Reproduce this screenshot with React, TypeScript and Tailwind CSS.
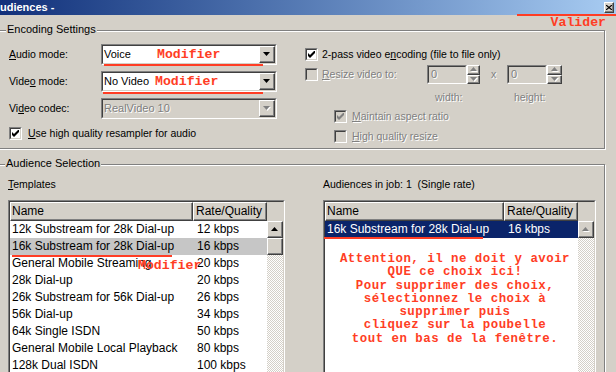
import type { ReactNode } from "react";

const sunkenOuter =
  "border border-t-[#808080] border-l-[#808080] border-r-white border-b-white";
const sunkenInner =
  "border border-t-[#404040] border-l-[#404040] border-r-[#d4d0c8] border-b-[#d4d0c8]";
const raised =
  "border border-t-white border-l-white border-r-[#404040] border-b-[#404040] shadow-[inset_-1px_-1px_0_#808080] bg-[#d4d0c8]";
const dim = "text-[#808080] [text-shadow:1px_1px_0_#fff]";
const red = "font-['Liberation_Mono',monospace] font-bold text-[13.2px] leading-[13.3px] text-[#ff3d24]";
const checker =
  "bg-[image:repeating-conic-gradient(#ffffff_0_25%,#d4d0c8_0_50%)] bg-[length:2px_2px]";

function Check({ checked, disabled }: { checked?: boolean; disabled?: boolean }) {
  return (
    <span className={`flex w-[13px] h-[13px] shrink-0 ${sunkenOuter}`}>
      <span
        className={`flex flex-1 items-center justify-center ${sunkenInner} ${
          disabled ? "bg-[#d4d0c8]" : "bg-white"
        }`}
      >
        {checked && (
          <svg width="7" height="7" viewBox="0 0 7 7">
            <polygon
              points="0,2 2,4 7,-1 7,2 2,7 0,5"
              fill={disabled ? "#808080" : "#000"}
            />
          </svg>
        )}
      </span>
    </span>
  );
}

function Arrow({ up, disabled }: { up?: boolean; disabled?: boolean }) {
  const pts = up ? "3.5,0 7,4 0,4" : "0,0 7,0 3.5,4";
  return (
    <svg width="8" height="5" viewBox="0 0 8 5">
      {disabled && <polygon points={pts} fill="#fff" transform="translate(1,1)" />}
      <polygon points={pts} fill={disabled ? "#808080" : "#000"} />
    </svg>
  );
}

function Combo({ text, disabled, children }: { text: string; disabled?: boolean; children?: ReactNode }) {
  return (
    <div className={`relative flex w-[176px] h-[21px] ${sunkenOuter}`}>
      <div className={`flex flex-1 ${sunkenInner} ${disabled ? "bg-[#d4d0c8]" : "bg-white"}`}>
        <span className={`flex flex-1 items-center pl-[1px] text-[11px] ${disabled ? dim : ""}`}>
          {text}
        </span>
        <span className={`flex w-[16px] items-center justify-center ${raised}`}>
          <Arrow disabled={disabled} />
        </span>
      </div>
      {children}
    </div>
  );
}

function Spin({ edit, btn }: { edit: number; btn: number }) {
  return (
    <div className="flex h-[19px]">
      <div className={`flex ${sunkenOuter}`} style={{ width: edit }}>
        <div className={`flex flex-1 items-center pl-[2px] text-[11px] ${sunkenInner} ${dim}`}>0</div>
      </div>
      <div className="flex flex-col" style={{ width: btn }}>
        <span className={`flex flex-1 items-center justify-center ${raised}`}>
          <Arrow up disabled />
        </span>
        <span className={`flex flex-1 items-center justify-center ${raised}`}>
          <Arrow disabled />
        </span>
      </div>
    </div>
  );
}

type Row = [string, string];

function ListView({
  nameW,
  rows,
  selected,
  focused,
  thumb,
  children,
}: {
  nameW: number;
  rows: Row[];
  selected: number;
  focused?: boolean;
  thumb?: boolean;
  children?: ReactNode;
}) {
  return (
    <div className={`flex h-[200px] ${sunkenOuter}`}>
      <div className={`flex flex-1 flex-col bg-white ${sunkenInner}`}>
        <div className="flex h-[19px] bg-[#d4d0c8] text-[12px]">
          <span className={`flex items-center pl-[1px] ${raised}`} style={{ width: nameW }}>
            Name
          </span>
          <span className={`flex w-[74px] items-center pl-[2px] ${raised}`}>Rate/Quality</span>
        </div>
        <div className="flex flex-1">
          <div className="relative flex-1 text-[12px]">
            {rows.map(([name, rate], i) => (
              <div
                key={name}
                className={`flex h-[17px] items-center ${
                  i === selected ? (focused ? "bg-[#0a246a] text-white" : "bg-[#c6c6c6]") : ""
                }`}
              >
                <span className="pl-[2px] whitespace-nowrap" style={{ width: nameW }}>
                  {name}
                </span>
                <span className="pl-[4px] whitespace-nowrap">{rate}</span>
              </div>
            ))}
            {children}
          </div>
          <div className="flex w-[16px] flex-col">
            <span className={`flex h-[17px] items-center justify-center ${raised}`}>
              <Arrow up disabled={!thumb} />
            </span>
            {thumb && <span className={`h-[17px] ${raised}`} />}
            <span className={`flex-1 ${checker}`} />
          </div>
        </div>
      </div>
    </div>
  );
}

const templates: Row[] = [
  ["12k Substream for 28k Dial-up", "12 kbps"],
  ["16k Substream for 28k Dial-up", "16 kbps"],
  ["General Mobile Streaming", "20 kbps"],
  ["28k Dial-up", "20 kbps"],
  ["26k Substream for 56k Dial-up", "26 kbps"],
  ["56k Dial-up", "34 kbps"],
  ["64k Single ISDN", "50 kbps"],
  ["General Mobile Local Playback", "80 kbps"],
  ["128k Dual ISDN", "100 kbps"],
];

const warning = [
  "Attention, il ne doit y avoir",
  "QUE ce choix ici!",
  "Pour supprimer des choix,",
  "sélectionnez le choix à",
  "supprimer puis",
  "cliquez sur la poubelle",
  "tout en bas de la fenêtre.",
];

export default function App() {
  return (
    <div className="relative w-[616px] h-[372px] overflow-hidden bg-[#d4d0c8] font-['Liberation_Sans',Arial,sans-serif] text-[10.5px] leading-[13px] text-black">
      {/* title bar */}
      <div className="flex h-[15px] items-center justify-between bg-linear-to-r from-[#12307a] to-[#a8ccf2]">
        <span className="text-[11px] font-bold text-white">udiences -</span>
        <span className={`mr-[2px] flex w-[10px] h-[11px] items-center justify-center ${raised}`}>
          <svg width="6" height="5" viewBox="0 0 6 5">
            <path d="M0 0L6 5M6 0L0 5" stroke="#000" strokeWidth="1.2" />
          </svg>
        </span>
      </div>
      <div className="absolute left-[517px] top-[14px] w-[99px] h-[2px] bg-[#ff3d24]" />
      <div className="flex h-[15px] items-center justify-end pr-[10px]">
        <span className={red}>Valider</span>
      </div>

      {/* Encoding Settings */}
      <div className="relative -ml-[4px] w-[609px] h-[119px] border border-[#808080] shadow-[inset_1px_1px_0_#fff,1px_1px_0_#fff]">
        <span className="absolute -top-[8px] left-[9px] bg-[#d4d0c8] px-[1px] text-[11px]">
          Encoding Settings
        </span>
        <div className="flex pt-[13px] pl-[12px]">
          <div className="flex w-[268px] flex-col gap-[6px]">
            <div className="flex h-[21px] items-center">
              <span className="w-[92px]">
                <u>A</u>udio mode:
              </span>
              <Combo text="Voice">
                <span className={`absolute left-[55px] top-[1px] flex h-[17px] items-center ${red}`}>Modifier</span>
                <span className="absolute left-[2px] top-[19px] w-[159px] h-[2px] bg-[#ff3d24]" />
              </Combo>
            </div>
            <div className="flex h-[21px] items-center">
              <span className="w-[92px]">
                Vide<u>o</u> mode:
              </span>
              <Combo text="No Video">
                <span className={`absolute left-[53px] top-[1px] flex h-[17px] items-center ${red}`}>Modifier</span>
                <span className="absolute left-[1px] top-[20px] w-[160px] h-[2px] bg-[#ff3d24]" />
              </Combo>
            </div>
            <div className="flex h-[21px] items-center">
              <span className="w-[92px]">
                Vi<u>d</u>eo codec:
              </span>
              <Combo text="RealVideo 10" disabled />
            </div>
            <div className="mt-[2px] flex h-[13px] items-center gap-[6px]">
              <Check checked />
              <span>
                <u>U</u>se high quality resampler for audio
              </span>
            </div>
          </div>

          <div className="ml-[28px] flex flex-col pt-[4px]">
            <div className="flex h-[13px] items-center gap-[4px]">
              <Check checked />
              <span>
                2-pass video e<u>n</u>coding (file to file only)
              </span>
            </div>
            <div className="mt-[4px] flex h-[19px] items-center">
              <Check disabled />
              <span className={`ml-[4px] w-[105px] ${dim}`}>
                <u>R</u>esize video to:
              </span>
              <Spin edit={40} btn={13} />
              <span className={`w-[27px] text-center ${dim}`}>x</span>
              <Spin edit={40} btn={15} />
            </div>
            <div className={`mt-[7px] flex h-[13px] pl-[130px] ${dim}`}>
              <span className="w-[79px]">width:</span>
              <span>height:</span>
            </div>
            <div className="mt-[6px] flex h-[13px] items-center gap-[5px] pl-[29px]">
              <Check checked disabled />
              <span className={dim}>
                <u>M</u>aintain aspect ratio
              </span>
            </div>
            <div className="mt-[7px] flex h-[13px] items-center gap-[5px] pl-[29px]">
              <Check disabled />
              <span className={dim}>
                <u>H</u>igh quality resize
              </span>
            </div>
          </div>
        </div>
      </div>

      {/* Audience Selection */}
      <div className="relative mt-[15px] -ml-[4px] w-[609px] h-[230px] border border-[#808080] shadow-[inset_1px_1px_0_#fff,1px_1px_0_#fff]">
        <span className="absolute -top-[8px] left-[8px] bg-[#d4d0c8] px-[1px] text-[11px]">
          Audience Selection
        </span>
        <div className="flex pt-[13px] pl-[11px]">
          <div className="flex w-[277px] flex-col">
            <span className="h-[13px]">
              <u>T</u>emplates
            </span>
            <div className="mt-[9px]">
              <ListView nameW={183} rows={templates} selected={1} thumb>
                <span className="absolute left-[2px] top-[34px] w-[160px] h-[2px] bg-[#ff3d24]" />
                <span className={`absolute left-[128px] top-[38px] ${red}`}>Modifier</span>
              </ListView>
            </div>
          </div>
          <div className="ml-[38px] flex w-[273px] flex-col">
            <span className="h-[13px] whitespace-pre">Audiences in job: 1  (Single rate)</span>
            <div className="mt-[9px]">
              <ListView nameW={179} rows={[["16k Substream for 28k Dial-up", "16 kbps"]]} selected={0} focused>
                <span className="absolute -left-[1px] top-[16px] w-[159px] h-[2px] bg-[#ff3d24]" />
                <div className="flex flex-col items-center pt-[15px] pl-[7px] font-['Liberation_Mono',monospace] text-[12.4px] font-bold tracking-[0.5px] text-[#ff3d24]">
                  {warning.map((line) => (
                    <span key={line} className="h-[13.3px] leading-[12px] whitespace-pre">
                      {line}
                    </span>
                  ))}
                </div>
              </ListView>
            </div>
          </div>
        </div>
      </div>
    </div>
  );
}
